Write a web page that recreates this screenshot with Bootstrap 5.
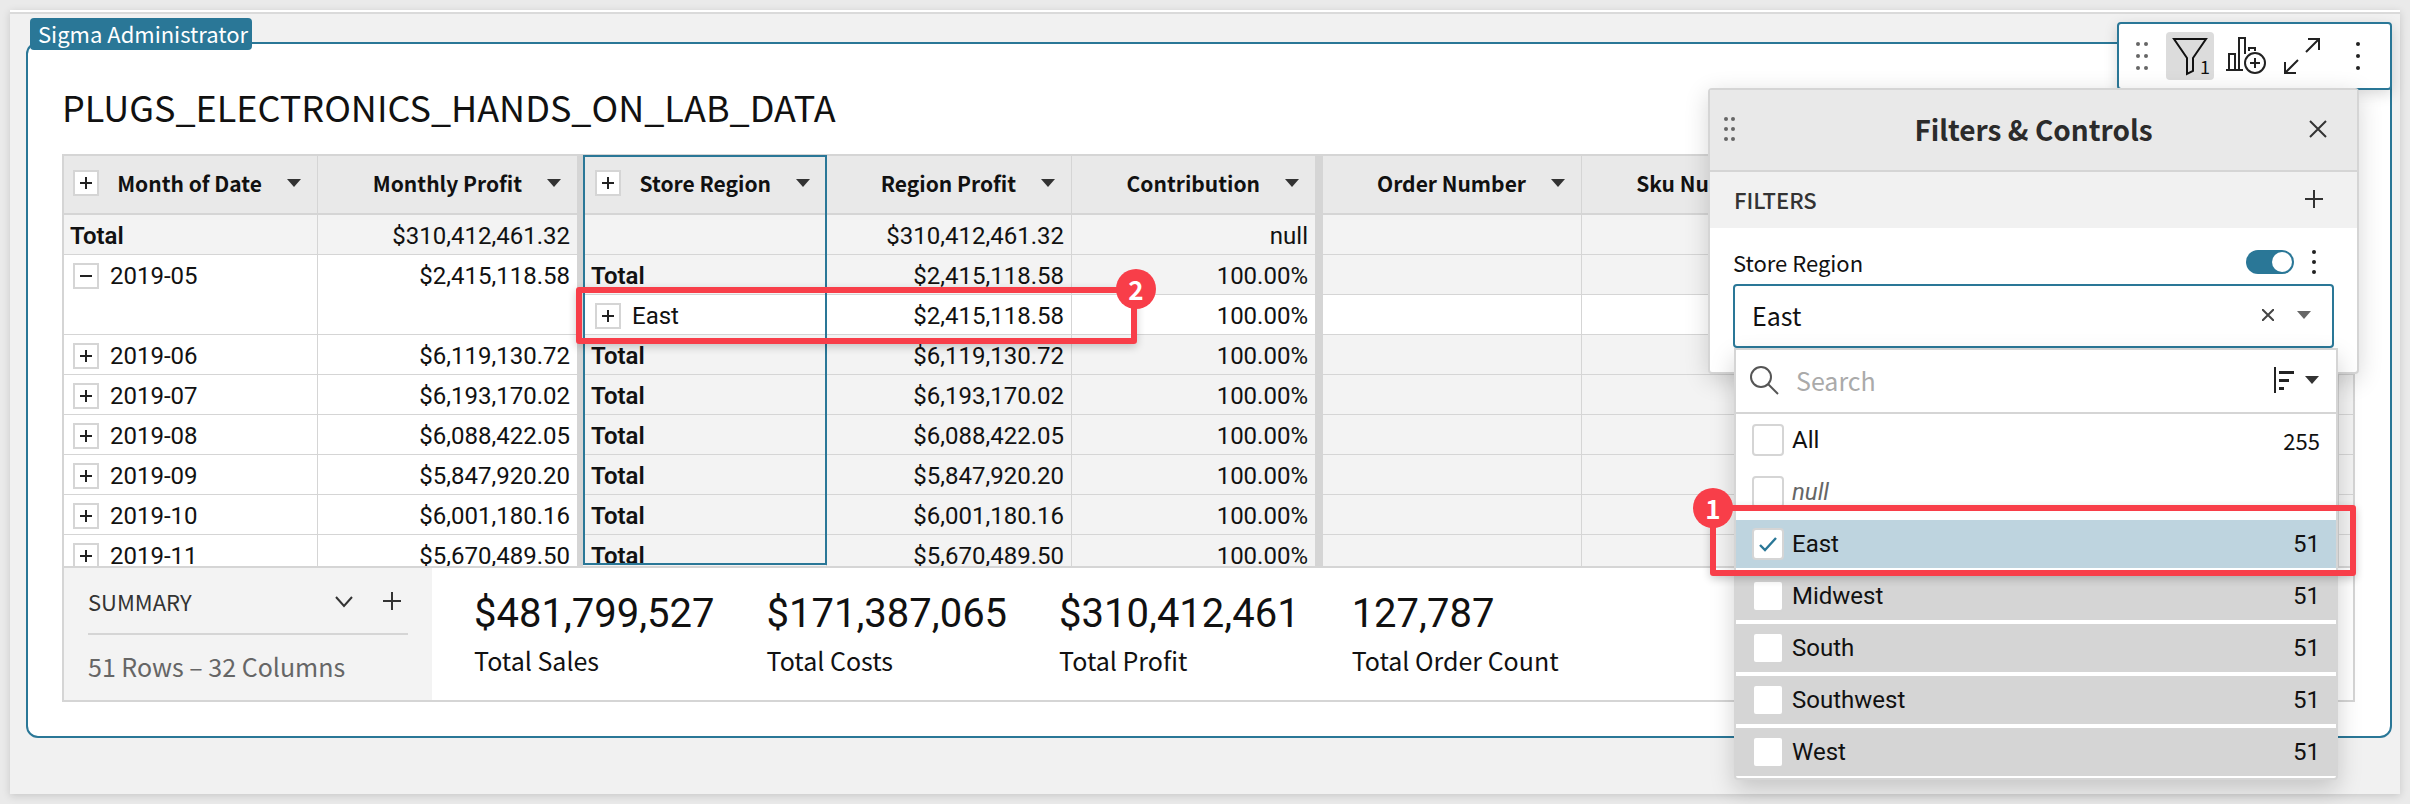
<!DOCTYPE html>
<html lang="en">
<head>
<meta charset="utf-8">
<meta name="viewport" content="width=device-width, initial-scale=1">
<title>Plugs Electronics – Filters &amp; Controls</title>
<link rel="stylesheet" href="https://cdn.jsdelivr.net/npm/bootstrap@5.3.0/dist/css/bootstrap.min.css">
<style>
:root{--brand:#2a7797;--line:#d5d5d5;--soft:#f3f3f3;--head:#e9e9e9;--alert:#f83e49;--ink:#111;
  --ui:"Noto Sans CJK SC","Noto Sans",sans-serif;--data:Roboto,sans-serif}
body{background:#eaeaea;color:var(--ink);font-family:var(--ui);font-size:25px;line-height:32px;padding:10px;overflow:hidden}
button{background:none;border:0;padding:0;color:inherit;font:inherit}
svg{display:block;flex:none}
.sheet{background:#f1f1f1;border-top:2px solid #fff;box-shadow:inset 0 2px #dadada,0 2px 8px rgba(0,0,0,.15);padding:30px 8px 56px 16px}
.element{background:#fff;border:2px solid var(--brand);border-radius:12px;padding:36px 35px 34px 34px}
.owner{left:2px;top:-26px;height:32px;line-height:30px;background:var(--brand);color:#fff;border-radius:4px;padding:0 4px 0 8px;font-size:22px}
.sheet-title{font-size:36px;line-height:52px;font-weight:400;margin:0 0 22px}
.frame{border:2px solid var(--line)}
.scroller{height:410px;overflow:hidden}

.pivot{width:100%;table-layout:fixed;border-collapse:separate;border-spacing:0;margin:0}
.pivot th,.pivot td{height:40px;border-right:1px solid var(--line);border-bottom:1px solid var(--line);white-space:nowrap;overflow:hidden}
.pivot td{padding:3px 7px 0 6px;vertical-align:top;line-height:36px}
.pivot td:last-child,.pivot th:last-child{border-right:0}
.pivot tbody{font-family:var(--data);font-size:24px}
.pivot thead th{height:59px;background:var(--head);border-bottom-width:2px;font-size:21px;font-weight:700;vertical-align:middle;padding:0 16px 3px 9px}
.pivot .num{text-align:right}
.pivot .thick{border-right:8px solid var(--line)}
.pivot .thick6{border-right:6px solid var(--line)}
.pivot .alt{background:var(--soft)}
.pivot .tot{font-weight:600}
.pivot td.region{padding-left:8px}
.pivot .keyed{padding-left:9px}
.pivot .keyed.east,.pivot th.picked-head{padding-left:12px}
.gap-row{gap:11px}
.knob{width:26px;height:26px;border:2px solid var(--line);background:#fff;display:grid;place-items:center;flex:none}
.caret{width:14px;height:8px;background:#333;clip-path:polygon(0 0,100% 0,50% 100%);flex:none}
.head-caret{margin-left:25px}
.picked{left:519px;top:-1px;width:244px;height:410px;border:2px solid var(--brand);pointer-events:none}

.facts{border-top:2px solid var(--line);height:134px}
.facts-side{width:368px;background:var(--soft);padding:17px 24px}
.facts-head{font-size:22px;color:#333;padding-bottom:16px;border-bottom:2px solid var(--line);gap:28px}
.facts-note{color:#666;padding-top:15px}
.facts-list{gap:52px;padding:22px 42px}
.big{font:400 40px/48px var(--data);margin-bottom:6px}

.tools{right:-2px;top:-22px;height:68px;width:275px;background:#fff;border:2px solid var(--brand);border-radius:4px;box-shadow:0 4px 14px rgba(0,0,0,.15);padding:8px 17px}
.tool-on{width:48px;height:48px;background:#dcdcdc;border-radius:4px;margin:0 12px 0 18px}
.tool-max{margin:0 34px 0 18px}

.panel{right:31px;top:44px;width:651px;height:286px;background:#fff;border:2px solid var(--line);border-radius:4px;box-shadow:0 6px 24px rgba(0,0,0,.16)}
.panel-head{height:82px;background:var(--head);border-bottom:2px solid var(--line);padding:0 30px 2px 14px;font-size:28px;font-weight:700;color:#2b2b2b}
.panel-title{margin-left:22px}
.panel-sub{height:56px;background:#f1f1f1;padding:0 34px 2px 24px;font-size:22px;color:#333}
.panel-body{padding:18px 23px}
.field-name{font-size:22px}
.form-switch .form-check-input.sw{width:48px;height:24px;margin:0;border:0;background-color:var(--brand);background-image:url("data:image/svg+xml,%3csvg xmlns='http://www.w3.org/2000/svg' viewBox='0 0 24 24'%3e%3ccircle cx='12' cy='12' r='10' fill='white'/%3e%3c/svg%3e");background-size:24px}
.kebab{margin:0 18px}
.combo{height:64px;border:2px solid var(--brand);border-radius:4px;padding:0 21px 2px 17px;margin-top:6px;background:#fff}
.combo .caret{background:#666}
.clear{margin-right:23px}

.menu-list{right:52px;top:304px;width:604px;background:#fff;border:2px solid var(--line);border-radius:0 0 4px 4px;box-shadow:0 10px 24px rgba(0,0,0,.18)}
.find{height:64px;border-bottom:2px solid var(--line);padding:0 17px 2px 13px;gap:15px}
.find input{border:0;outline:0;background:none;min-width:0;flex:1}
.find input::placeholder{color:#aaa;opacity:1}
.sort{gap:10px}
.opts{padding-top:2px;font-size:24px}
.opt{height:48px;margin-bottom:4px;padding:0 16px 0 16px;gap:8px;font-family:var(--data)}
.opts li:last-child .opt{margin-bottom:2px}
.opt .form-check-input{width:32px;height:32px;margin:0;border:2px solid var(--line);border-radius:4px;background-color:#fff;background-size:28px}
.opt .form-check-input:checked{background-image:url("data:image/svg+xml,%3csvg xmlns='http://www.w3.org/2000/svg' viewBox='0 0 28 28'%3e%3cpath fill='none' stroke='%232a7797' stroke-width='2.4' d='M6 15l5 5L22 8'/%3e%3c/svg%3e")}
.opt-null{font-style:italic;color:#666}
.all-count{font-family:var(--ui);font-size:22px}
.off{background:var(--line)}
.on{background:#bed4df}

.mark-box{border:6px solid var(--alert);border-radius:3px;box-shadow:0 3px 8px rgba(0,0,0,.2);pointer-events:none}
.mark-dot{width:40px;height:40px;border-radius:50%;background:var(--alert);color:#fff;font:700 26px/40px var(--ui);text-align:center}
.mark-a{right:34px;top:461px;width:646px;height:71px}
.mark-a .mark-dot{left:-23px;top:-23px}
.mark-b{left:512px;top:131px;width:561px;height:57px}
.mark-b .mark-dot{right:-25px;top:-24px}
</style>
</head>
<body>
<main class="sheet">
<section class="element position-relative">
  <span class="owner position-absolute">Sigma Administrator</span>
  <h1 class="sheet-title">PLUGS_ELECTRONICS_HANDS_ON_LAB_DATA</h1>
  <div class="frame position-relative">
    <div class="scroller">
      <table class="pivot">
        <colgroup><col style="width:254px"><col style="width:265px"><col style="width:244px"><col style="width:245px"><col style="width:251px"><col style="width:259px"><col style="width:238px"><col><col style="width:14px"></colgroup>
        <thead><tr id="heads"></tr></thead>
        <tbody id="rows"></tbody>
      </table>
    </div>
    <div class="picked position-absolute"></div>
    <div class="mark-box mark-b position-absolute"><span class="mark-dot position-absolute">2</span></div>
    <div class="facts d-flex">
      <div class="facts-side">
        <div class="facts-head d-flex align-items-center">
          <span class="me-auto">SUMMARY</span>
          <button aria-label="Collapse"><svg width="20" height="20" fill="none" stroke="#333" stroke-width="2"><path d="M2 6l8 9 8-9"/></svg></button>
          <button class="me-1" aria-label="Add summary"><svg width="22" height="20" stroke="#333" stroke-width="2"><path d="M10 1v18M1 10h18"/></svg></button>
        </div>
        <div class="facts-note">51 Rows – 32 Columns</div>
      </div>
      <div class="facts-list d-flex">
        <div><div class="big">$481,799,527</div>Total Sales</div>
        <div><div class="big">$171,387,065</div>Total Costs</div>
        <div><div class="big">$310,412,461</div>Total Profit</div>
        <div><div class="big">127,787</div>Total Order Count</div>
      </div>
    </div>
  </div>

  <div class="tools position-absolute d-flex align-items-center">
    <svg width="12" height="28" fill="#666"><g id="grip"><circle cx="2" cy="2" r="2"/><circle cx="2" cy="14" r="2"/><circle cx="2" cy="26" r="2"/></g><use href="#grip" x="8"/></svg>
    <button class="tool-on" aria-label="Filters, 1 applied"><svg width="48" height="48" fill="none" stroke="#111" stroke-width="2"><path d="M8 7h32L27 26v13l-6 3V26z"/><text x="34" y="42" font-size="18" fill="#111" stroke="none">1</text></svg></button>
    <button aria-label="Add child chart"><svg width="40" height="40" fill="none" stroke="#222" stroke-width="2"><path d="M0 34h17M3 34V18h6v16M13 34V2h6v16M23 15v-3h6v3"/><circle cx="29" cy="27" r="10"/><path d="M29 22v10M24 27h10"/></svg></button>
    <button class="tool-max" aria-label="Maximize"><svg width="38" height="38" fill="none" stroke="#222" stroke-width="2"><path d="M24 2h11v11M35 2L22 15M1 25v11h11M1 36l13-13"/></svg></button>
    <button aria-label="More"><svg width="4" height="28" fill="#222"><circle cx="2" cy="2" r="2"/><circle cx="2" cy="14" r="2"/><circle cx="2" cy="26" r="2"/></svg></button>
  </div>

  <aside class="panel position-absolute">
    <div class="panel-head d-flex align-items-center justify-content-between">
      <svg width="12" height="26" fill="#666"><g id="grip2"><circle cx="2" cy="3" r="2"/><circle cx="2" cy="13" r="2"/><circle cx="2" cy="23" r="2"/></g><use href="#grip2" x="7"/></svg>
      <span class="panel-title">Filters &amp; Controls</span>
      <button aria-label="Close"><svg width="18" height="18" stroke="#333" stroke-width="2"><path d="M1 1l16 16M17 1L1 17"/></svg></button>
    </div>
    <div class="panel-sub d-flex align-items-center justify-content-between fw-medium">FILTERS
      <button aria-label="Add filter"><svg width="18" height="18" stroke="#333" stroke-width="2"><path d="M9 0v18M0 9h18"/></svg></button>
    </div>
    <div class="panel-body">
      <div class="d-flex align-items-center">
        <label class="me-auto field-name" for="sw">Store Region</label>
        <div class="form-switch d-flex p-0 m-0"><input class="form-check-input sw" type="checkbox" role="switch" id="sw" checked></div>
        <button class="kebab" aria-label="Filter options"><svg width="4" height="24" fill="#222"><circle cx="2" cy="2" r="2"/><circle cx="2" cy="12" r="2"/><circle cx="2" cy="22" r="2"/></svg></button>
      </div>
      <div class="combo d-flex align-items-center">
        <span class="me-auto">East</span>
        <button class="clear" aria-label="Clear"><svg width="12" height="12" stroke="#444" stroke-width="2"><path d="M0 0l12 12M12 0L0 12"/></svg></button>
        <span class="caret"></span>
      </div>
    </div>
  </aside>

  <div class="menu-list position-absolute">
    <div class="find d-flex align-items-center">
      <svg width="30" height="30" fill="none" stroke="#555" stroke-width="2"><circle cx="12" cy="12" r="10"/><path d="M19 19l10 10"/></svg>
      <input type="text" placeholder="Search" aria-label="Search">
      <button class="sort d-flex align-items-center" aria-label="Sort"><svg width="21" height="26" fill="#222"><path d="M0 0h2v26H0zM5 4h15v3H5zM5 12h10v3H5zM5 20h5v3H5z"/></svg><span class="caret"></span></button>
    </div>
    <ul class="opts list-unstyled m-0" id="opts"></ul>
  </div>
  <div class="mark-box mark-a position-absolute"><span class="mark-dot position-absolute">1</span></div>
</section>
</main>
<script>
const knob = s => `<button class="knob" aria-label="${s ? 'Expand' : 'Collapse'}"><svg width="12" height="12" stroke="#222" stroke-width="2"><path d="M0 6h12${s ? 'M6 0v12' : ''}"/></svg></button>`;
const edge = {1: 'thick6', 2: 'picked-head', 4: 'thick'};
heads.innerHTML = ['Month of Date','Monthly Profit','Store Region','Region Profit','Contribution','Order Number','Sku Number'].map((t, i) =>
  `<th scope="col" class="${edge[i] || ''}"><div class="d-flex align-items-center">${i == 0 || i == 2 ? knob(1) : ''}<span class="ms-auto">${t}</span><span class="caret head-caret"></span></div></th>`).join('') + '<th></th><th class="p-0"></th>';
const rest = a => `<td class="${a}"></td><td class="${a}"></td><td class="${a}"></td><td class="${a} p-0"></td>`;
const keyed = (s, t) => `<div class="d-flex align-items-center gap-row">${knob(s)}<span>${t}</span></div>`;
let html = `<tr><td class="alt tot">Total</td><td class="alt num thick6">$310,412,461.32</td><td class="alt"></td><td class="alt num">$310,412,461.32</td><td class="alt num thick">null</td>${rest('alt')}</tr>`;
[['2019-05','$2,415,118.58'],['2019-06','$6,119,130.72'],['2019-07','$6,193,170.02'],['2019-08','$6,088,422.05'],['2019-09','$5,847,920.20'],['2019-10','$6,001,180.16'],['2019-11','$5,670,489.50']].forEach(([m, v], i) => {
  const span = i ? '' : ' rowspan="2"';
  html += `<tr><td class="keyed"${span}>${keyed(i, m)}</td><td class="num thick6"${span}>${v}</td><td class="alt tot region">Total</td><td class="alt num">${v}</td><td class="alt num thick">100.00%</td>${rest('alt')}</tr>`;
  if (!i) html += `<tr><td class="keyed east">${keyed(1, 'East')}</td><td class="num">${v}</td><td class="num thick">100.00%</td>${rest('')}</tr>`;
});
rows.innerHTML = html;
opts.innerHTML = [['All',255,''],['null','',''],['East',51,'on'],['Midwest',51,'off'],['South',51,'off'],['Southwest',51,'off'],['West',51,'off']].map(([t, n, c]) =>
  `<li><label class="opt d-flex align-items-center ${c}"><input class="form-check-input" type="checkbox"${c == 'on' ? ' checked' : ''}><span class="me-auto${t == 'null' ? ' opt-null' : ''}">${t}</span><span${t == 'All' ? ' class="all-count"' : ''}>${n}</span></label></li>`).join('');
</script>
<script src="https://cdn.jsdelivr.net/npm/bootstrap@5.3.0/dist/js/bootstrap.bundle.min.js"></script>
</body>
</html>
